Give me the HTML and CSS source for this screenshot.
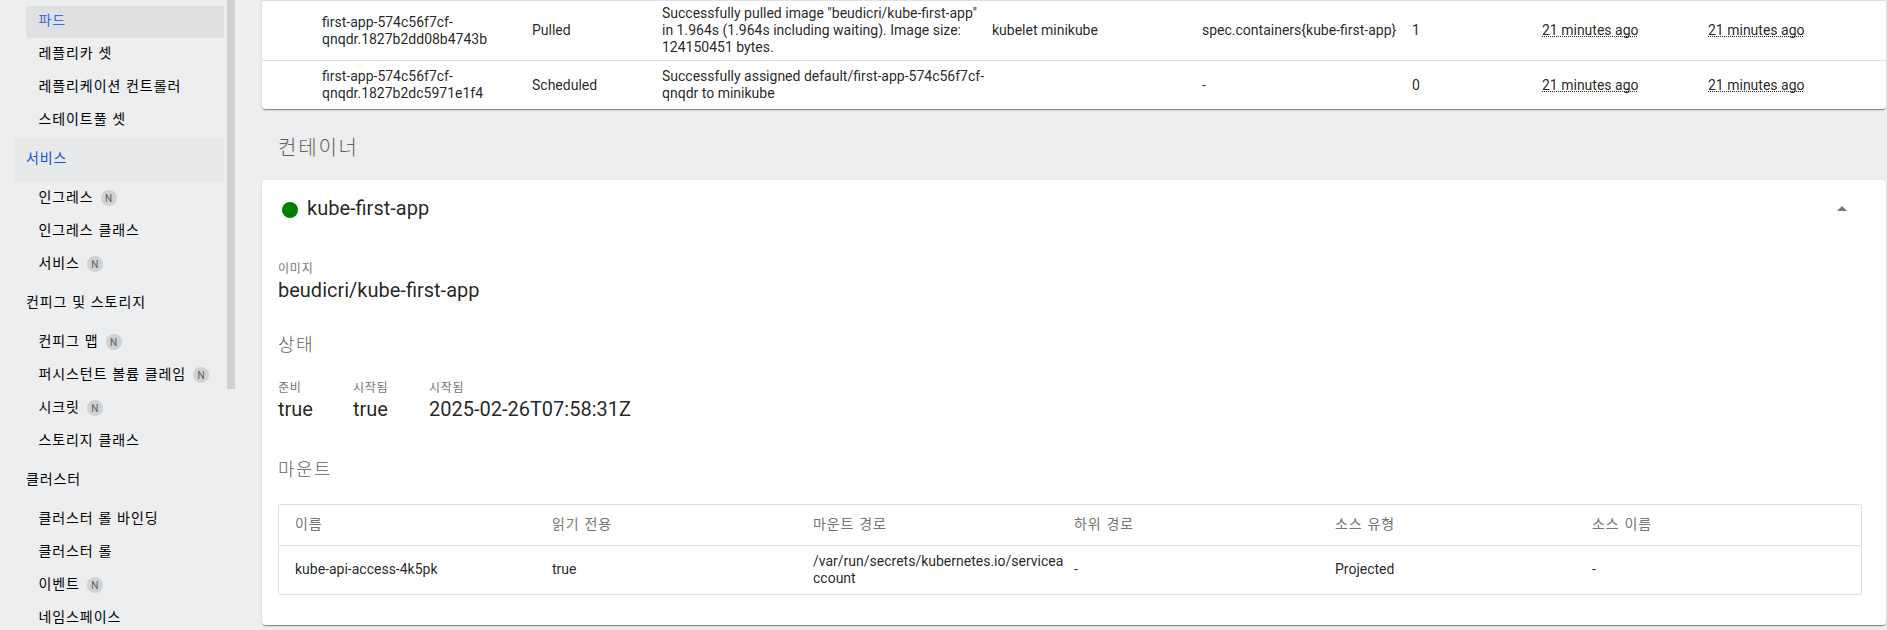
FILE: index.html
```html
<!DOCTYPE html>
<html lang="ko">
<head>
<meta charset="utf-8">
<title>Kubernetes Dashboard</title>
<link rel="stylesheet" href="styles.css">
</head>
<body>
<div class="app">
  <nav class="sidebar ko">
    <div class="nav">
      <a class="item active">파드</a>
      <a class="item">레플리카 셋</a>
      <a class="item">레플리케이션 컨트롤러</a>
      <a class="item">스테이트풀 셋</a>
      <a class="group current">서비스</a>
      <a class="item">인그레스<span class="badge">N</span></a>
      <a class="item">인그레스 클래스</a>
      <a class="item">서비스<span class="badge">N</span></a>
      <a class="group">컨피그 및 스토리지</a>
      <a class="item">컨피그 맵<span class="badge">N</span></a>
      <a class="item">퍼시스턴트 볼륨 클레임<span class="badge">N</span></a>
      <a class="item">시크릿<span class="badge">N</span></a>
      <a class="item">스토리지 클래스</a>
      <a class="group">클러스터</a>
      <a class="item">클러스터 롤 바인딩</a>
      <a class="item">클러스터 롤</a>
      <a class="item">이벤트<span class="badge">N</span></a>
      <a class="item">네임스페이스</a>
    </div>
    <div class="scrollbar"></div>
  </nav>
  <main class="content">
    <section class="card events">
      <div class="event tall">
        <div></div>
        <div>first-app-574c56f7cf-qnqdr.1827b2dd08b4743b</div>
        <div>Pulled</div>
        <div class="message">Successfully pulled image "beudicri/kube-first-app" in 1.964s (1.964s including waiting). Image size: 124150451 bytes.</div>
        <div>kubelet minikube</div>
        <div>spec.containers{kube-first-app}</div>
        <div>1</div>
        <div><span class="date">21 minutes ago</span></div>
        <div><span class="date">21 minutes ago</span></div>
      </div>
      <div class="event">
        <div></div>
        <div>first-app-574c56f7cf-qnqdr.1827b2dc5971e1f4</div>
        <div>Scheduled</div>
        <div class="message">Successfully assigned default/first-app-574c56f7cf-qnqdr to minikube</div>
        <div></div>
        <div>-</div>
        <div>0</div>
        <div><span class="date">21 minutes ago</span></div>
        <div><span class="date">21 minutes ago</span></div>
      </div>
    </section>
    <h2 class="section-title ko">컨테이너</h2>
    <section class="card container-card">
      <header class="card-header">
        <span class="status"></span>
        <span class="name">kube-first-app</span>
        <svg class="arrow" width="10" height="5" viewBox="0 0 10 5"><path d="M0 5l5-5 5 5z" fill="#757575"/></svg>
      </header>
      <div class="props image">
        <div class="prop"><div class="label ko">이미지</div><div class="value">beudicri/kube-first-app</div></div>
      </div>
      <h3 class="subtitle ko">상태</h3>
      <div class="props state">
        <div class="prop"><div class="label ko">준비</div><div class="value">true</div></div>
        <div class="prop"><div class="label ko">시작됨</div><div class="value">true</div></div>
        <div class="prop"><div class="label ko">시작됨</div><div class="value">2025-02-26T07:58:31Z</div></div>
      </div>
      <h3 class="subtitle mounts-title ko">마운트</h3>
      <div class="mounts">
        <div class="mount head ko">
          <div>이름</div><div>읽기 전용</div><div>마운트 경로</div><div>하위 경로</div><div>소스 유형</div><div>소스 이름</div>
        </div>
        <div class="mount body">
          <div>kube-api-access-4k5pk</div><div>true</div><div>/var/run/secrets/kubernetes.io/serviceaccount</div><div>-</div><div>Projected</div><div>-</div>
        </div>
      </div>
    </section>
  </main>
</div>
</body>
</html>
```
FILE: styles.css
```css
* { box-sizing: border-box; }
body {
  margin: 0;
  height: 630px;
  overflow: hidden;
  background: #edeef0;
  color: rgba(0, 0, 0, .87);
  font: 14px/17px Roboto, "Noto Sans CJK KR", sans-serif;
}
.ko { font-family: "Noto Sans CJK KR", sans-serif; letter-spacing: .065em; }
.app { display: flex; height: 630px; }

.sidebar { display: flex; width: 262px; flex: none; padding-left: 14px; color: #000; }
.nav { width: 210px; padding-top: 6px; }
.item, .group { display: flex; align-items: center; white-space: nowrap; margin-bottom: 1px; }
.item { height: 32px; margin-left: 12px; padding: 0 0 5px 12.5px; border-radius: 2px; }
.group { height: 44px; padding: 0 0 5px 12px; }
.active { background: #e0e0e0; color: #326de6; }
.current { background: #e8e9eb; color: #0d4df5; }
.badge {
  width: 16px;
  height: 16px;
  margin: 3px 0 0 7px;
  border-radius: 50%;
  background: #d0d1d3;
  color: #5c5d5f;
  font: 400 10px/17px Roboto, sans-serif;
  letter-spacing: 0;
  text-align: center;
}
.scrollbar { width: 8px; height: 389px; margin-left: 3px; background: #d0d1d3; }

.content { width: 1624px; flex: none; }
.card {
  background: #fff;
  border-radius: 4px;
  box-shadow: 0 2px 1px -1px rgba(0, 0, 0, .3), 0 1px 1px rgba(0, 0, 0, .14), 0 1px 3px rgba(0, 0, 0, .12);
}
.events { height: 109px; border-radius: 0 0 4px 4px; }
.event {
  display: grid;
  grid-template-columns: 60px 210px 130px 330px 210px 210px 130px 166px 178px;
  align-items: center;
  height: 49px;
  border-top: 1px solid #e0e0e0;
}
.event.tall { height: 60px; }
.event > div { padding: .2px 8px 0 0; }
.event > .message { padding-right: 4px; }
.date {
  text-decoration: underline dotted #222 1px;
  text-underline-offset: 1px;
  text-decoration-skip-ink: none;
}

.section-title, .subtitle { margin: 0; color: #5f5f5f; font-weight: 300; line-height: 24px; }
.section-title { padding: 26px 0 21px 16px; font-size: 20px; letter-spacing: .09em; }
.container-card { height: 445px; padding: 0 24px 0 16px; }
.card-header { display: flex; align-items: center; height: 56px; padding-left: 4px; }
.status { width: 16px; height: 16px; margin-top: 4px; border-radius: 50%; background: #008000; }
.name { margin-left: 9px; font-size: 20px; line-height: 24px; }
.arrow { margin: 0 15px 0 auto; }
.props { display: flex; height: 60px; }
.image { margin-top: 23px; }
.label { height: 18px; color: #757575; font-size: 12px; line-height: 18px; }
.value { font-size: 20px; line-height: 26px; }
.subtitle { height: 32px; margin-top: 12px; font-size: 18px; letter-spacing: .08em; }
.state { gap: 40px; margin-top: 15px; }
.prop + .prop + .prop { margin-left: .5px; }
.mounts-title { margin-top: 18px; }
.mounts { margin-top: 16px; border: 1px solid #e0e0e0; border-radius: 2px; }
.mount {
  display: grid;
  grid-template-columns: 257px 261px 261px 261px 257px 1fr;
  align-items: center;
  padding-left: 16px;
}
.mount > div { padding-right: 8px; word-break: break-all; }
.mount.head { height: 41px; padding-bottom: 3px; border-bottom: 1px solid #e0e0e0; color: #757575; }
.mount.body { height: 48px; padding-bottom: .4px; }
```
